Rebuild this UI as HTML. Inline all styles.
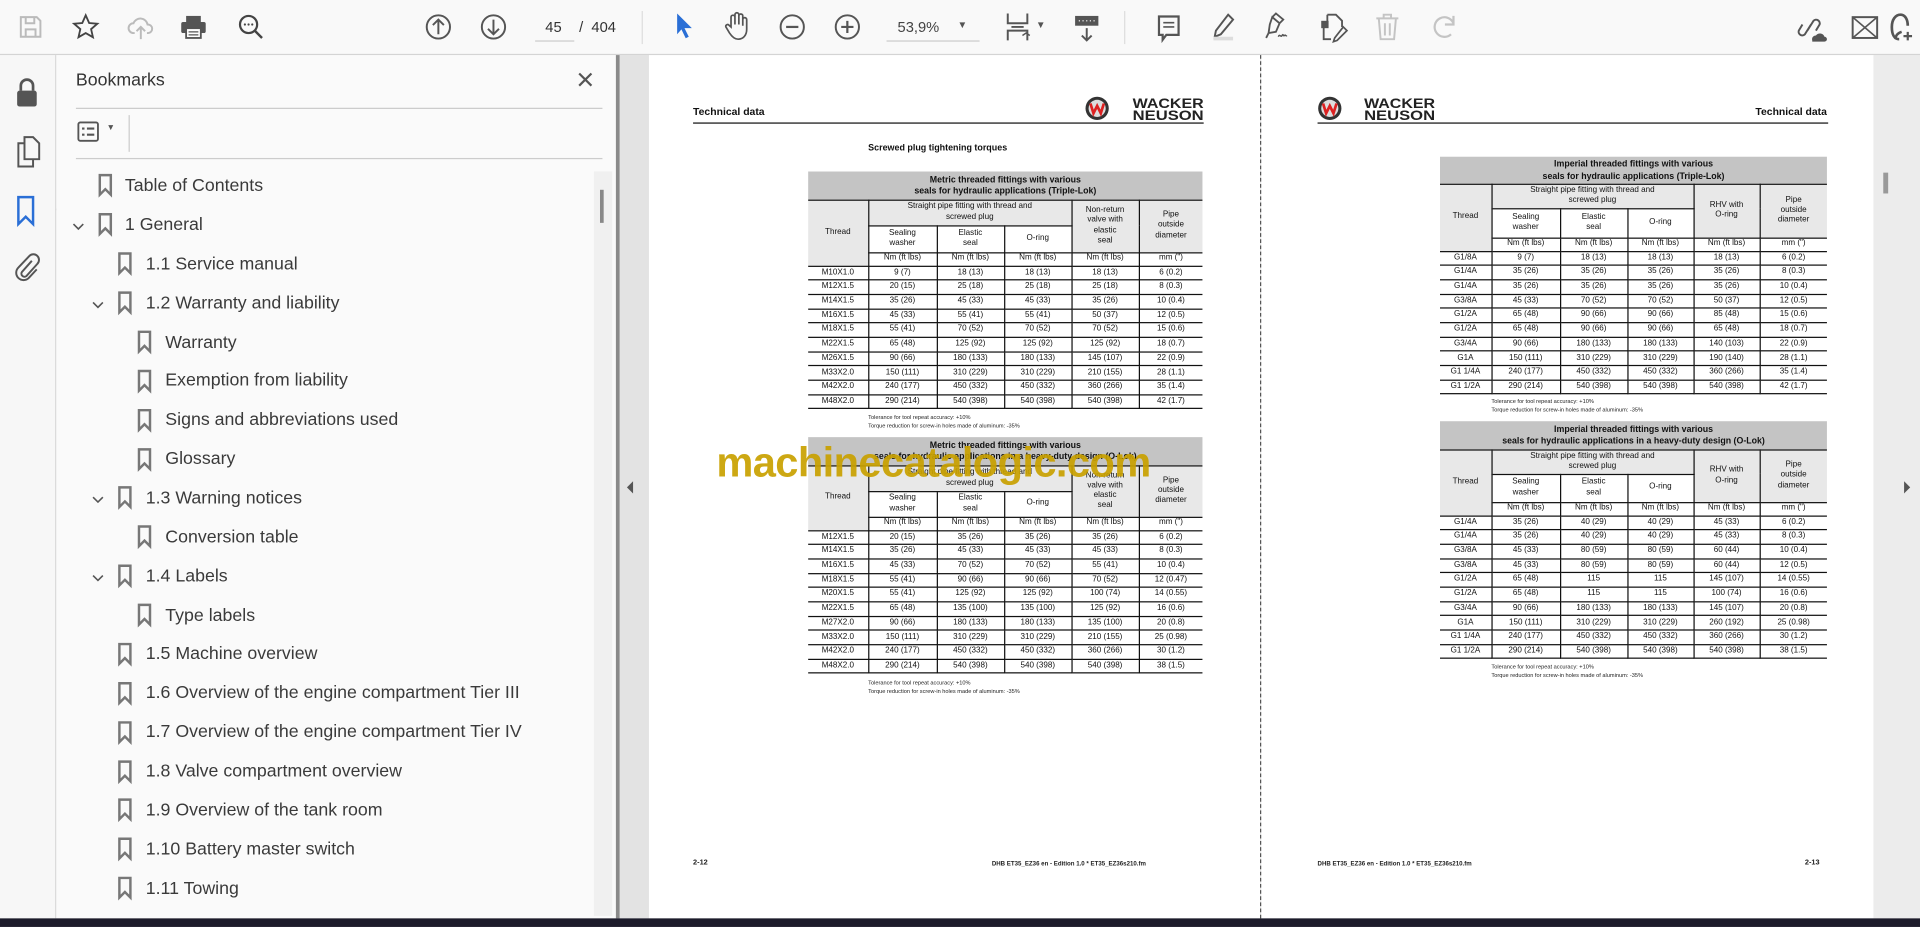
<!DOCTYPE html>
<html><head><meta charset="utf-8">
<style>
*{margin:0;padding:0;box-sizing:border-box}
html,body{width:1920px;height:927px;overflow:hidden;background:#e5e5e5;font-family:"Liberation Sans",sans-serif}
#w{position:absolute;left:0;top:0;width:1568px;height:757px;transform:scale(1.22449);transform-origin:0 0}
.a{position:absolute}
#tb{left:0;top:0;width:1568px;height:45px;background:#f9f9f9;border-bottom:1px solid #d4d4d4}
#rail{left:0;top:45px;width:46px;height:705px;background:#f7f7f7;border-right:1px solid #d8d8d8}
#bm{left:46px;top:45px;width:457px;height:705px;background:#fafafa}
#gs{left:503px;top:45px;width:27px;height:705px;background:#e3e3e3;border-left:3px solid #8a8a8a}
#pl{left:530px;top:45px;width:499px;height:705px;background:#fff}
#pr{left:1030px;top:45px;width:500px;height:705px;background:#fff}
#dash{left:1029px;top:45px;width:0;height:705px;border-left:1px dashed #555}
#rs{left:1530px;top:45px;width:38px;height:705px;background:#ececec}
#bot{left:0;top:750px;width:1568px;height:7px;background:#1c1b2a}
.bi{position:absolute;font-size:14.5px;color:#3a3a3a;white-space:nowrap}
table{position:absolute;border-collapse:collapse;table-layout:fixed;font-size:6.6px;color:#111;font-family:"Liberation Sans",sans-serif}
td{border:0.8px solid #111;text-align:center;vertical-align:middle;padding:0;line-height:1.25;overflow:hidden;white-space:nowrap}
td:first-child{border-left:none}
tr td:last-child{border-right:none}
.tt td{background:#c4c4c4;font-weight:bold;font-size:7.2px;line-height:1.35;border-top:none}
.g{background:#e8e8e8}
.d td{height:11.7px}
.u td{height:11px}
.note{position:absolute;font-size:4.6px;color:#222;line-height:6.6px;white-space:nowrap}
.h1{position:absolute;font-size:8.5px;font-weight:bold;color:#111;white-space:nowrap}
.ft{position:absolute;font-size:5px;font-weight:bold;color:#222;white-space:nowrap}
.wm{position:absolute;left:585px;top:359px;font-size:34px;font-weight:bold;color:#c9a100;letter-spacing:-0.5px;white-space:nowrap;opacity:.92}
svg{position:absolute;overflow:visible}
</style></head><body><div id="w">
<div id="tb" class="a"></div>
<svg style="left:15px;top:12px" width="20" height="20"><path d="M2 2h13l3 3v13H2z M6 2v5h7V2 M6 18v-6h8v6" fill="none" stroke="#bbb" stroke-width="1.6"/></svg>
<svg style="left:59px;top:11px" width="22" height="22"><path d="M11 1.5l2.8 6.3 6.7.6-5.1 4.4 1.5 6.6L11 16l-5.9 3.4 1.5-6.6L1.5 8.4l6.7-.6z" fill="none" stroke="#444" stroke-width="1.5"/></svg>
<svg style="left:104px;top:12px" width="22" height="22"><path d="M6 15H5a4 4 0 010-8 6 6 0 0111.5 1A3.5 3.5 0 0117 15h-1 M11 20V10 M7.5 13.5L11 10l3.5 3.5" fill="none" stroke="#bbb" stroke-width="1.6"/></svg>
<svg style="left:147px;top:11px" width="22" height="22"><path d="M5 2h12v5H5z" fill="#555"/><rect x="1" y="7" width="20" height="9" rx="1.5" fill="#555"/><rect x="5" y="12" width="12" height="8" fill="#fff" stroke="#555" stroke-width="1.5"/><path d="M7 15h8M7 17.5h8" stroke="#555"/></svg>
<svg style="left:194px;top:11px" width="24" height="24"><circle cx="9" cy="9" r="7" fill="none" stroke="#444" stroke-width="1.8"/><path d="M14 14l6 6" stroke="#444" stroke-width="2"/><circle cx="6" cy="9" r=".9" fill="#444"/><circle cx="9" cy="9" r=".9" fill="#444"/><circle cx="12" cy="9" r=".9" fill="#444"/></svg>
<svg style="left:347px;top:11px" width="22" height="22"><circle cx="11" cy="11" r="9.5" fill="none" stroke="#555" stroke-width="1.6"/><path d="M11 17V5M6.5 9.5L11 5l4.5 4.5" fill="none" stroke="#555" stroke-width="1.6"/></svg>
<svg style="left:392px;top:11px" width="22" height="22"><circle cx="11" cy="11" r="9.5" fill="none" stroke="#555" stroke-width="1.6"/><path d="M11 5v12M6.5 12.5L11 17l4.5-4.5" fill="none" stroke="#555" stroke-width="1.6"/></svg>
<div class="a" style="left:437px;top:15px;width:30px;text-align:center;font-size:12px;color:#333">45</div>
<div class="a" style="left:437px;top:33px;width:32px;border-bottom:1px solid #ccc"></div>
<div class="a" style="left:473px;top:15px;font-size:12px;color:#333">/ &nbsp;404</div>
<div class="a" style="left:524px;top:9px;width:1px;height:27px;background:#ddd"></div>
<svg style="left:551px;top:10px" width="16" height="24"><path d="M2 1l12 12h-6l3.5 7-2.5 1.2L5.5 14 2 18z" fill="#2a6fd6"/></svg>
<svg style="left:591px;top:9px" width="22" height="24"><path d="M6 13V5a1.6 1.6 0 013.2 0v6V3a1.6 1.6 0 013.2 0v8V4a1.6 1.6 0 013.2 0v8V7a1.6 1.6 0 013.2 0v8c0 5-3 8-7 8-3 0-5-2-7-5l-3-5a1.5 1.5 0 012.6-1.4z" fill="none" stroke="#555" stroke-width="1.4"/></svg>
<svg style="left:636px;top:11px" width="22" height="22"><circle cx="11" cy="11" r="9.5" fill="none" stroke="#555" stroke-width="1.6"/><path d="M6 11h10" stroke="#555" stroke-width="1.8"/></svg>
<svg style="left:681px;top:11px" width="22" height="22"><circle cx="11" cy="11" r="9.5" fill="none" stroke="#555" stroke-width="1.6"/><path d="M6 11h10M11 6v10" stroke="#555" stroke-width="1.8"/></svg>
<div class="a" style="left:733px;top:15px;font-size:12px;color:#444">53,9%</div>
<div class="a" style="left:724px;top:33px;width:76px;border-bottom:1px solid #ccc"></div>
<div class="a" style="left:782px;top:16px;font-size:8px;color:#555">▼</div>
<svg style="left:820px;top:9px" width="26" height="26"><path d="M3 2v8h16V2 M3 24v-8h16v8 M6 13h10" fill="none" stroke="#555" stroke-width="1.6"/><path d="M15 20l3-2 3 2" fill="none" stroke="#555" stroke-width="1.2"/></svg>
<div class="a" style="left:846px;top:16px;font-size:8px;color:#555">▼</div>
<svg style="left:877px;top:12px" width="22" height="24"><rect x="1" y="1" width="19" height="8" fill="#555"/><path d="M4 5h1M7 5h1M10 5h1M13 5h1M16 5h1" stroke="#fff"/><path d="M10.5 11v10M6.5 17l4 4 4-4" fill="none" stroke="#555" stroke-width="1.6"/></svg>
<div class="a" style="left:918px;top:9px;width:1px;height:27px;background:#ddd"></div>
<svg style="left:945px;top:12px" width="20" height="24"><path d="M1.5 1.5h16v15h-10l-3 4v-4h-3z" fill="none" stroke="#555" stroke-width="1.8"/><path d="M5 6.5h9M5 10h9" stroke="#555" stroke-width="1.3"/></svg>
<svg style="left:988px;top:10px" width="22" height="26"><path d="M15 2l4 4-10 12-5 2 1-5z" fill="none" stroke="#555" stroke-width="1.6"/><rect x="3" y="20" width="16" height="3" fill="#ddd"/></svg>
<svg style="left:1031px;top:10px" width="24" height="26"><path d="M8 4l6 5-3 7-6 1 1-7z M8 4l3-3 6 5-3 3 M5 17l-2 4" fill="none" stroke="#555" stroke-width="1.5"/><path d="M13 20c1-3 2 1 3-1s1 1 2 0 1 1 2 0" fill="none" stroke="#555" stroke-width="1.2"/></svg>
<svg style="left:1077px;top:10px" width="24" height="26"><path d="M7 2h7l5 5v5 M7 2v6 M4 10v12h6" fill="none" stroke="#555" stroke-width="1.5"/><rect x="2" y="7" width="6" height="6" fill="#555"/><path d="M20 12l3 3-8 8-3 1 1-3z" fill="none" stroke="#555" stroke-width="1.4"/></svg>
<svg style="left:1123px;top:10px" width="20" height="24"><path d="M1 5h18M7 5V2h6v3 M3 5l1.5 17h11L17 5 M8 9v10M12 9v10" fill="none" stroke="#c4c4c4" stroke-width="1.6"/></svg>
<svg style="left:1170px;top:11px" width="20" height="24"><path d="M15 17A8 8 0 1117 8 M17 2v7h-7" fill="none" stroke="#c4c4c4" stroke-width="1.8"/></svg>
<svg style="left:1466px;top:11px" width="26" height="26"><path d="M10 14l5-8a3 3 0 015 3l-3 5 M13 9l-5 8a3 3 0 01-5-3l3-5" fill="none" stroke="#555" stroke-width="1.6"/><path d="M14 22a3 3 0 013-4 4 4 0 017 1 2 2 0 010 4h-10z" fill="#555"/></svg>
<svg style="left:1512px;top:13px" width="22" height="20"><rect x="1" y="1" width="20" height="17" fill="none" stroke="#555" stroke-width="1.6"/><path d="M1 1l20 17M21 1L1 18" stroke="#555" stroke-width="1.3"/></svg>
<svg style="left:1543px;top:11px" width="20" height="24"><path d="M8 21c-4 0-6-4-6-10S5 1 9 1s6 4 6 9" fill="none" stroke="#555" stroke-width="2.2"/><path d="M5 21c0-3 2-5 5-6" fill="none" stroke="#555" stroke-width="2"/><path d="M15 15v7M11.5 18.5h7" stroke="#555" stroke-width="1.8"/></svg>

<div id="rail" class="a"></div>
<svg style="left:12px;top:63px" width="20" height="26"><path d="M5 11V7a5 5 0 0110 0v4" fill="none" stroke="#555" stroke-width="2.2"/><rect x="2" y="11" width="16" height="13" rx="2" fill="#555"/></svg>
<svg style="left:12px;top:111px" width="22" height="26"><path d="M8 1h7l5 5v13H8z M8 6H3v19h12v-6" fill="none" stroke="#555" stroke-width="1.6"/></svg>
<svg style="left:12px;top:160px" width="18" height="26"><path d="M3 1h12v22l-6-6-6 6z" fill="none" stroke="#2a6fd6" stroke-width="2"/></svg>
<svg style="left:44px;top:164px" width="8" height="16"><path d="M7 0L2 7l5 8" fill="#fafafa" stroke="#d0d0d0"/></svg>
<svg style="left:12px;top:206px" width="20" height="24"><path d="M14 7l-8 9a2.5 2.5 0 003.5 3.5l9-10a4.5 4.5 0 00-6.5-6.5L3 12.5a6 6 0 008.5 8.5L18 14" fill="none" stroke="#555" stroke-width="1.6"/></svg>

<div id="bm" class="a"></div>
<div class="a" style="left:62px;top:58px;font-size:14.5px;color:#333">Bookmarks</div>
<svg style="left:472px;top:59px" width="12" height="12"><path d="M1 1l10 10M11 1L1 11" stroke="#555" stroke-width="1.8"/></svg>
<div class="a" style="left:62px;top:88px;width:430px;height:1px;background:#ccc"></div>
<svg style="left:63px;top:99px" width="20" height="18"><rect x="1" y="1" width="16" height="15" rx="1.5" fill="none" stroke="#555" stroke-width="1.5"/><path d="M4 6h2M4 11h2M8 6h6M8 11h6" stroke="#555" stroke-width="1.8"/></svg>
<div class="a" style="left:87px;top:101px;font-size:7px;color:#555">▼</div>
<div class="a" style="left:105px;top:94px;width:1px;height:30px;background:#ccc"></div>
<div class="a" style="left:62px;top:129px;width:430px;height:1px;background:#ccc"></div>
<div class="a" style="left:485px;top:140px;width:15px;height:608px;background:#f0f0f0"></div>
<div class="a" style="left:490px;top:155px;width:3px;height:27px;background:#888"></div>

<svg style="display:none"><defs><path id="bmk" d="M1.5 1h9v16l-4.5-4.5L1.5 17z" fill="none" stroke="#777" stroke-width="2"/><path id="chv" d="M1 1l4 4 4-4" fill="none" stroke="#555" stroke-width="1.3"/></defs></svg>
<svg style="left:80px;top:142px" width="12" height="18"><use href="#bmk"/></svg><div class="bi" style="left:102px;top:144px">Table of Contents</div>
<svg style="left:59px;top:182px" width="10" height="7"><use href="#chv"/></svg><svg style="left:80px;top:174px" width="12" height="18"><use href="#bmk"/></svg><div class="bi" style="left:102px;top:176px">1 General</div>
<svg style="left:96px;top:206px" width="12" height="18"><use href="#bmk"/></svg><div class="bi" style="left:119px;top:208px">1.1 Service manual</div>
<svg style="left:75px;top:246px" width="10" height="7"><use href="#chv"/></svg><svg style="left:96px;top:238px" width="12" height="18"><use href="#bmk"/></svg><div class="bi" style="left:119px;top:240px">1.2 Warranty and liability</div>
<svg style="left:112px;top:270px" width="12" height="18"><use href="#bmk"/></svg><div class="bi" style="left:135px;top:272px">Warranty</div>
<svg style="left:112px;top:302px" width="12" height="18"><use href="#bmk"/></svg><div class="bi" style="left:135px;top:303px">Exemption from liability</div>
<svg style="left:112px;top:334px" width="12" height="18"><use href="#bmk"/></svg><div class="bi" style="left:135px;top:335px">Signs and abbreviations used</div>
<svg style="left:112px;top:366px" width="12" height="18"><use href="#bmk"/></svg><div class="bi" style="left:135px;top:367px">Glossary</div>
<svg style="left:75px;top:405px" width="10" height="7"><use href="#chv"/></svg><svg style="left:96px;top:397px" width="12" height="18"><use href="#bmk"/></svg><div class="bi" style="left:119px;top:399px">1.3 Warning notices</div>
<svg style="left:112px;top:429px" width="12" height="18"><use href="#bmk"/></svg><div class="bi" style="left:135px;top:431px">Conversion table</div>
<svg style="left:75px;top:469px" width="10" height="7"><use href="#chv"/></svg><svg style="left:96px;top:461px" width="12" height="18"><use href="#bmk"/></svg><div class="bi" style="left:119px;top:463px">1.4 Labels</div>
<svg style="left:112px;top:493px" width="12" height="18"><use href="#bmk"/></svg><div class="bi" style="left:135px;top:495px">Type labels</div>
<svg style="left:96px;top:525px" width="12" height="18"><use href="#bmk"/></svg><div class="bi" style="left:119px;top:526px">1.5 Machine overview</div>
<svg style="left:96px;top:557px" width="12" height="18"><use href="#bmk"/></svg><div class="bi" style="left:119px;top:558px">1.6 Overview of the engine compartment Tier III</div>
<svg style="left:96px;top:589px" width="12" height="18"><use href="#bmk"/></svg><div class="bi" style="left:119px;top:590px">1.7 Overview of the engine compartment Tier IV</div>
<svg style="left:96px;top:621px" width="12" height="18"><use href="#bmk"/></svg><div class="bi" style="left:119px;top:622px">1.8 Valve compartment overview</div>
<svg style="left:96px;top:652px" width="12" height="18"><use href="#bmk"/></svg><div class="bi" style="left:119px;top:654px">1.9 Overview of the tank room</div>
<svg style="left:96px;top:684px" width="12" height="18"><use href="#bmk"/></svg><div class="bi" style="left:119px;top:686px">1.10 Battery master switch</div>
<svg style="left:96px;top:716px" width="12" height="18"><use href="#bmk"/></svg><div class="bi" style="left:119px;top:718px">1.11 Towing</div>

<div id="gs" class="a"></div>
<svg style="left:512px;top:393px" width="6" height="10"><path d="M5 0L0 5l5 5z" fill="#555"/></svg>
<div id="pl" class="a"></div>
<div id="pr" class="a"></div>
<div id="dash" class="a"></div>
<div id="rs" class="a"></div>
<div class="a" style="left:1538px;top:141px;width:4px;height:17px;background:#999"></div>
<svg style="left:1555px;top:393px" width="6" height="10"><path d="M0 0l5 5-5 5z" fill="#555"/></svg>
<div id="bot" class="a"></div>

<!-- LEFT PAGE -->
<div class="h1" style="left:566px;top:86px">Technical data</div>
<svg style="left:886px;top:78px" width="98" height="22"><circle cx="10" cy="10.5" r="9.5" fill="#333"/><circle cx="10" cy="10.5" r="7" fill="#ddd"/><path d="M4.5 6.5l2.5 8 3-6 3 6 2.5-8" fill="none" stroke="#d22" stroke-width="2.2"/><text x="39" y="10" font-family="Liberation Sans" font-weight="bold" font-size="11.5" fill="#222" textLength="58" lengthAdjust="spacingAndGlyphs">WACKER</text><text x="39" y="20" font-family="Liberation Sans" font-weight="bold" font-size="11.5" fill="#222" textLength="58" lengthAdjust="spacingAndGlyphs">NEUSON</text></svg>
<div class="a" style="left:566px;top:100px;width:417px;height:1px;background:#111"></div>
<div class="a" style="left:709px;top:116px;font-size:7.3px;font-weight:bold;color:#111">Screwed plug tightening torques</div>

<table style="left:660px;top:140px;width:322px">
<colgroup><col style="width:49px"><col style="width:56px"><col style="width:55px"><col style="width:55px"><col style="width:55px"><col style="width:52px"></colgroup>
<tr class="tt"><td colspan="6" style="height:23px">Metric threaded fittings with various<br>seals for hydraulic applications (Triple-Lok)</td></tr>
<tr><td rowspan="3" class="g">Thread</td><td colspan="3" class="g" style="height:21px">Straight pipe fitting with thread and<br>screwed plug</td><td rowspan="2" class="g">Non-return<br>valve with<br>elastic<br>seal</td><td rowspan="2" class="g">Pipe<br>outside<br>diameter</td></tr>
<tr><td style="height:22px">Sealing<br>washer</td><td>Elastic<br>seal</td><td>O-ring</td></tr>
<tr class="u"><td>Nm (ft lbs)</td><td>Nm (ft lbs)</td><td>Nm (ft lbs)</td><td>Nm (ft lbs)</td><td>mm (")</td></tr>
<tr class="d"><td>M10X1.0</td><td>9 (7)</td><td>18 (13)</td><td>18 (13)</td><td>18 (13)</td><td>6 (0.2)</td></tr>
<tr class="d"><td>M12X1.5</td><td>20 (15)</td><td>25 (18)</td><td>25 (18)</td><td>25 (18)</td><td>8 (0.3)</td></tr>
<tr class="d"><td>M14X1.5</td><td>35 (26)</td><td>45 (33)</td><td>45 (33)</td><td>35 (26)</td><td>10 (0.4)</td></tr>
<tr class="d"><td>M16X1.5</td><td>45 (33)</td><td>55 (41)</td><td>55 (41)</td><td>50 (37)</td><td>12 (0.5)</td></tr>
<tr class="d"><td>M18X1.5</td><td>55 (41)</td><td>70 (52)</td><td>70 (52)</td><td>70 (52)</td><td>15 (0.6)</td></tr>
<tr class="d"><td>M22X1.5</td><td>65 (48)</td><td>125 (92)</td><td>125 (92)</td><td>125 (92)</td><td>18 (0.7)</td></tr>
<tr class="d"><td>M26X1.5</td><td>90 (66)</td><td>180 (133)</td><td>180 (133)</td><td>145 (107)</td><td>22 (0.9)</td></tr>
<tr class="d"><td>M33X2.0</td><td>150 (111)</td><td>310 (229)</td><td>310 (229)</td><td>210 (155)</td><td>28 (1.1)</td></tr>
<tr class="d"><td>M42X2.0</td><td>240 (177)</td><td>450 (332)</td><td>450 (332)</td><td>360 (266)</td><td>35 (1.4)</td></tr>
<tr class="d"><td>M48X2.0</td><td>290 (214)</td><td>540 (398)</td><td>540 (398)</td><td>540 (398)</td><td>42 (1.7)</td></tr>
</table>
<div class="note" style="left:709px;top:338px">Tolerance for tool repeat accuracy: +10%<br>Torque reduction for screw-in holes made of aluminum: -35%</div>

<table style="left:660px;top:357px;width:322px">
<colgroup><col style="width:49px"><col style="width:56px"><col style="width:55px"><col style="width:55px"><col style="width:55px"><col style="width:52px"></colgroup>
<tr class="tt"><td colspan="6" style="height:23px">Metric threaded fittings with various<br>seals for hydraulic applications in a heavy-duty design (O-Lok)</td></tr>
<tr><td rowspan="3" class="g">Thread</td><td colspan="3" class="g" style="height:21px">Straight pipe fitting with thread and<br>screwed plug</td><td rowspan="2" class="g">Non-return<br>valve with<br>elastic<br>seal</td><td rowspan="2" class="g">Pipe<br>outside<br>diameter</td></tr>
<tr><td style="height:21px">Sealing<br>washer</td><td>Elastic<br>seal</td><td>O-ring</td></tr>
<tr class="u"><td>Nm (ft lbs)</td><td>Nm (ft lbs)</td><td>Nm (ft lbs)</td><td>Nm (ft lbs)</td><td>mm (")</td></tr>
<tr class="d"><td>M12X1.5</td><td>20 (15)</td><td>35 (26)</td><td>35 (26)</td><td>35 (26)</td><td>6 (0.2)</td></tr>
<tr class="d"><td>M14X1.5</td><td>35 (26)</td><td>45 (33)</td><td>45 (33)</td><td>45 (33)</td><td>8 (0.3)</td></tr>
<tr class="d"><td>M16X1.5</td><td>45 (33)</td><td>70 (52)</td><td>70 (52)</td><td>55 (41)</td><td>10 (0.4)</td></tr>
<tr class="d"><td>M18X1.5</td><td>55 (41)</td><td>90 (66)</td><td>90 (66)</td><td>70 (52)</td><td>12 (0.47)</td></tr>
<tr class="d"><td>M20X1.5</td><td>55 (41)</td><td>125 (92)</td><td>125 (92)</td><td>100 (74)</td><td>14 (0.55)</td></tr>
<tr class="d"><td>M22X1.5</td><td>65 (48)</td><td>135 (100)</td><td>135 (100)</td><td>125 (92)</td><td>16 (0.6)</td></tr>
<tr class="d"><td>M27X2.0</td><td>90 (66)</td><td>180 (133)</td><td>180 (133)</td><td>135 (100)</td><td>20 (0.8)</td></tr>
<tr class="d"><td>M33X2.0</td><td>150 (111)</td><td>310 (229)</td><td>310 (229)</td><td>210 (155)</td><td>25 (0.98)</td></tr>
<tr class="d"><td>M42X2.0</td><td>240 (177)</td><td>450 (332)</td><td>450 (332)</td><td>360 (266)</td><td>30 (1.2)</td></tr>
<tr class="d"><td>M48X2.0</td><td>290 (214)</td><td>540 (398)</td><td>540 (398)</td><td>540 (398)</td><td>38 (1.5)</td></tr>
</table>
<div class="note" style="left:709px;top:555px">Tolerance for tool repeat accuracy: +10%<br>Torque reduction for screw-in holes made of aluminum: -35%</div>

<div class="wm">machinecatalogic.com</div>

<div class="ft" style="left:566px;top:702px;font-size:6px">2-12</div>
<div class="ft" style="left:810px;top:703px">DHB ET35_EZ36 en - Edition 1.0 * ET35_EZ36s210.fm</div>

<!-- RIGHT PAGE -->
<svg style="left:1076px;top:78px" width="98" height="22"><circle cx="10" cy="10.5" r="9.5" fill="#333"/><circle cx="10" cy="10.5" r="7" fill="#ddd"/><path d="M4.5 6.5l2.5 8 3-6 3 6 2.5-8" fill="none" stroke="#d22" stroke-width="2.2"/><text x="38" y="10" font-family="Liberation Sans" font-weight="bold" font-size="11.5" fill="#222" textLength="58" lengthAdjust="spacingAndGlyphs">WACKER</text><text x="38" y="20" font-family="Liberation Sans" font-weight="bold" font-size="11.5" fill="#222" textLength="58" lengthAdjust="spacingAndGlyphs">NEUSON</text></svg>
<div class="h1" style="left:1424px;top:86px;width:68px;text-align:right">Technical data</div>
<div class="a" style="left:1076px;top:100px;width:417px;height:1px;background:#111"></div>

<table style="left:1176px;top:128px;width:316px">
<colgroup><col style="width:42px"><col style="width:56px"><col style="width:55px"><col style="width:54px"><col style="width:54px"><col style="width:55px"></colgroup>
<tr class="tt"><td colspan="6" style="height:22px">Imperial threaded fittings with various<br>seals for hydraulic applications (Triple-Lok)</td></tr>
<tr><td rowspan="3" class="g">Thread</td><td colspan="3" class="g" style="height:20px">Straight pipe fitting with thread and<br>screwed plug</td><td rowspan="2" class="g">RHV with<br>O-ring</td><td rowspan="2" class="g">Pipe<br>outside<br>diameter</td></tr>
<tr><td style="height:24px">Sealing<br>washer</td><td>Elastic<br>seal</td><td>O-ring</td></tr>
<tr class="u"><td>Nm (ft lbs)</td><td>Nm (ft lbs)</td><td>Nm (ft lbs)</td><td>Nm (ft lbs)</td><td>mm (")</td></tr>
<tr class="d"><td>G1/8A</td><td>9 (7)</td><td>18 (13)</td><td>18 (13)</td><td>18 (13)</td><td>6 (0.2)</td></tr>
<tr class="d"><td>G1/4A</td><td>35 (26)</td><td>35 (26)</td><td>35 (26)</td><td>35 (26)</td><td>8 (0.3)</td></tr>
<tr class="d"><td>G1/4A</td><td>35 (26)</td><td>35 (26)</td><td>35 (26)</td><td>35 (26)</td><td>10 (0.4)</td></tr>
<tr class="d"><td>G3/8A</td><td>45 (33)</td><td>70 (52)</td><td>70 (52)</td><td>50 (37)</td><td>12 (0.5)</td></tr>
<tr class="d"><td>G1/2A</td><td>65 (48)</td><td>90 (66)</td><td>90 (66)</td><td>85 (48)</td><td>15 (0.6)</td></tr>
<tr class="d"><td>G1/2A</td><td>65 (48)</td><td>90 (66)</td><td>90 (66)</td><td>65 (48)</td><td>18 (0.7)</td></tr>
<tr class="d"><td>G3/4A</td><td>90 (66)</td><td>180 (133)</td><td>180 (133)</td><td>140 (103)</td><td>22 (0.9)</td></tr>
<tr class="d"><td>G1A</td><td>150 (111)</td><td>310 (229)</td><td>310 (229)</td><td>190 (140)</td><td>28 (1.1)</td></tr>
<tr class="d"><td>G1 1/4A</td><td>240 (177)</td><td>450 (332)</td><td>450 (332)</td><td>360 (266)</td><td>35 (1.4)</td></tr>
<tr class="d"><td>G1 1/2A</td><td>290 (214)</td><td>540 (398)</td><td>540 (398)</td><td>540 (398)</td><td>42 (1.7)</td></tr>
</table>
<div class="note" style="left:1218px;top:325px">Tolerance for tool repeat accuracy: +10%<br>Torque reduction for screw-in holes made of aluminum: -35%</div>

<table style="left:1176px;top:344px;width:316px">
<colgroup><col style="width:42px"><col style="width:56px"><col style="width:55px"><col style="width:54px"><col style="width:54px"><col style="width:55px"></colgroup>
<tr class="tt"><td colspan="6" style="height:23px">Imperial threaded fittings with various<br>seals for hydraulic applications in a heavy-duty design (O-Lok)</td></tr>
<tr><td rowspan="3" class="g">Thread</td><td colspan="3" class="g" style="height:20px">Straight pipe fitting with thread and<br>screwed plug</td><td rowspan="2" class="g">RHV with<br>O-ring</td><td rowspan="2" class="g">Pipe<br>outside<br>diameter</td></tr>
<tr><td style="height:23px">Sealing<br>washer</td><td>Elastic<br>seal</td><td>O-ring</td></tr>
<tr class="u"><td>Nm (ft lbs)</td><td>Nm (ft lbs)</td><td>Nm (ft lbs)</td><td>Nm (ft lbs)</td><td>mm (")</td></tr>
<tr class="d"><td>G1/4A</td><td>35 (26)</td><td>40 (29)</td><td>40 (29)</td><td>45 (33)</td><td>6 (0.2)</td></tr>
<tr class="d"><td>G1/4A</td><td>35 (26)</td><td>40 (29)</td><td>40 (29)</td><td>45 (33)</td><td>8 (0.3)</td></tr>
<tr class="d"><td>G3/8A</td><td>45 (33)</td><td>80 (59)</td><td>80 (59)</td><td>60 (44)</td><td>10 (0.4)</td></tr>
<tr class="d"><td>G3/8A</td><td>45 (33)</td><td>80 (59)</td><td>80 (59)</td><td>60 (44)</td><td>12 (0.5)</td></tr>
<tr class="d"><td>G1/2A</td><td>65 (48)</td><td>115</td><td>115</td><td>145 (107)</td><td>14 (0.55)</td></tr>
<tr class="d"><td>G1/2A</td><td>65 (48)</td><td>115</td><td>115</td><td>100 (74)</td><td>16 (0.6)</td></tr>
<tr class="d"><td>G3/4A</td><td>90 (66)</td><td>180 (133)</td><td>180 (133)</td><td>145 (107)</td><td>20 (0.8)</td></tr>
<tr class="d"><td>G1A</td><td>150 (111)</td><td>310 (229)</td><td>310 (229)</td><td>260 (192)</td><td>25 (0.98)</td></tr>
<tr class="d"><td>G1 1/4A</td><td>240 (177)</td><td>450 (332)</td><td>450 (332)</td><td>360 (266)</td><td>30 (1.2)</td></tr>
<tr class="d"><td>G1 1/2A</td><td>290 (214)</td><td>540 (398)</td><td>540 (398)</td><td>540 (398)</td><td>38 (1.5)</td></tr>
</table>
<div class="note" style="left:1218px;top:542px">Tolerance for tool repeat accuracy: +10%<br>Torque reduction for screw-in holes made of aluminum: -35%</div>

<div class="ft" style="left:1076px;top:703px">DHB ET35_EZ36 en - Edition 1.0 * ET35_EZ36s210.fm</div>
<div class="ft" style="left:1474px;top:702px;font-size:6px">2-13</div>
</div></body></html>
